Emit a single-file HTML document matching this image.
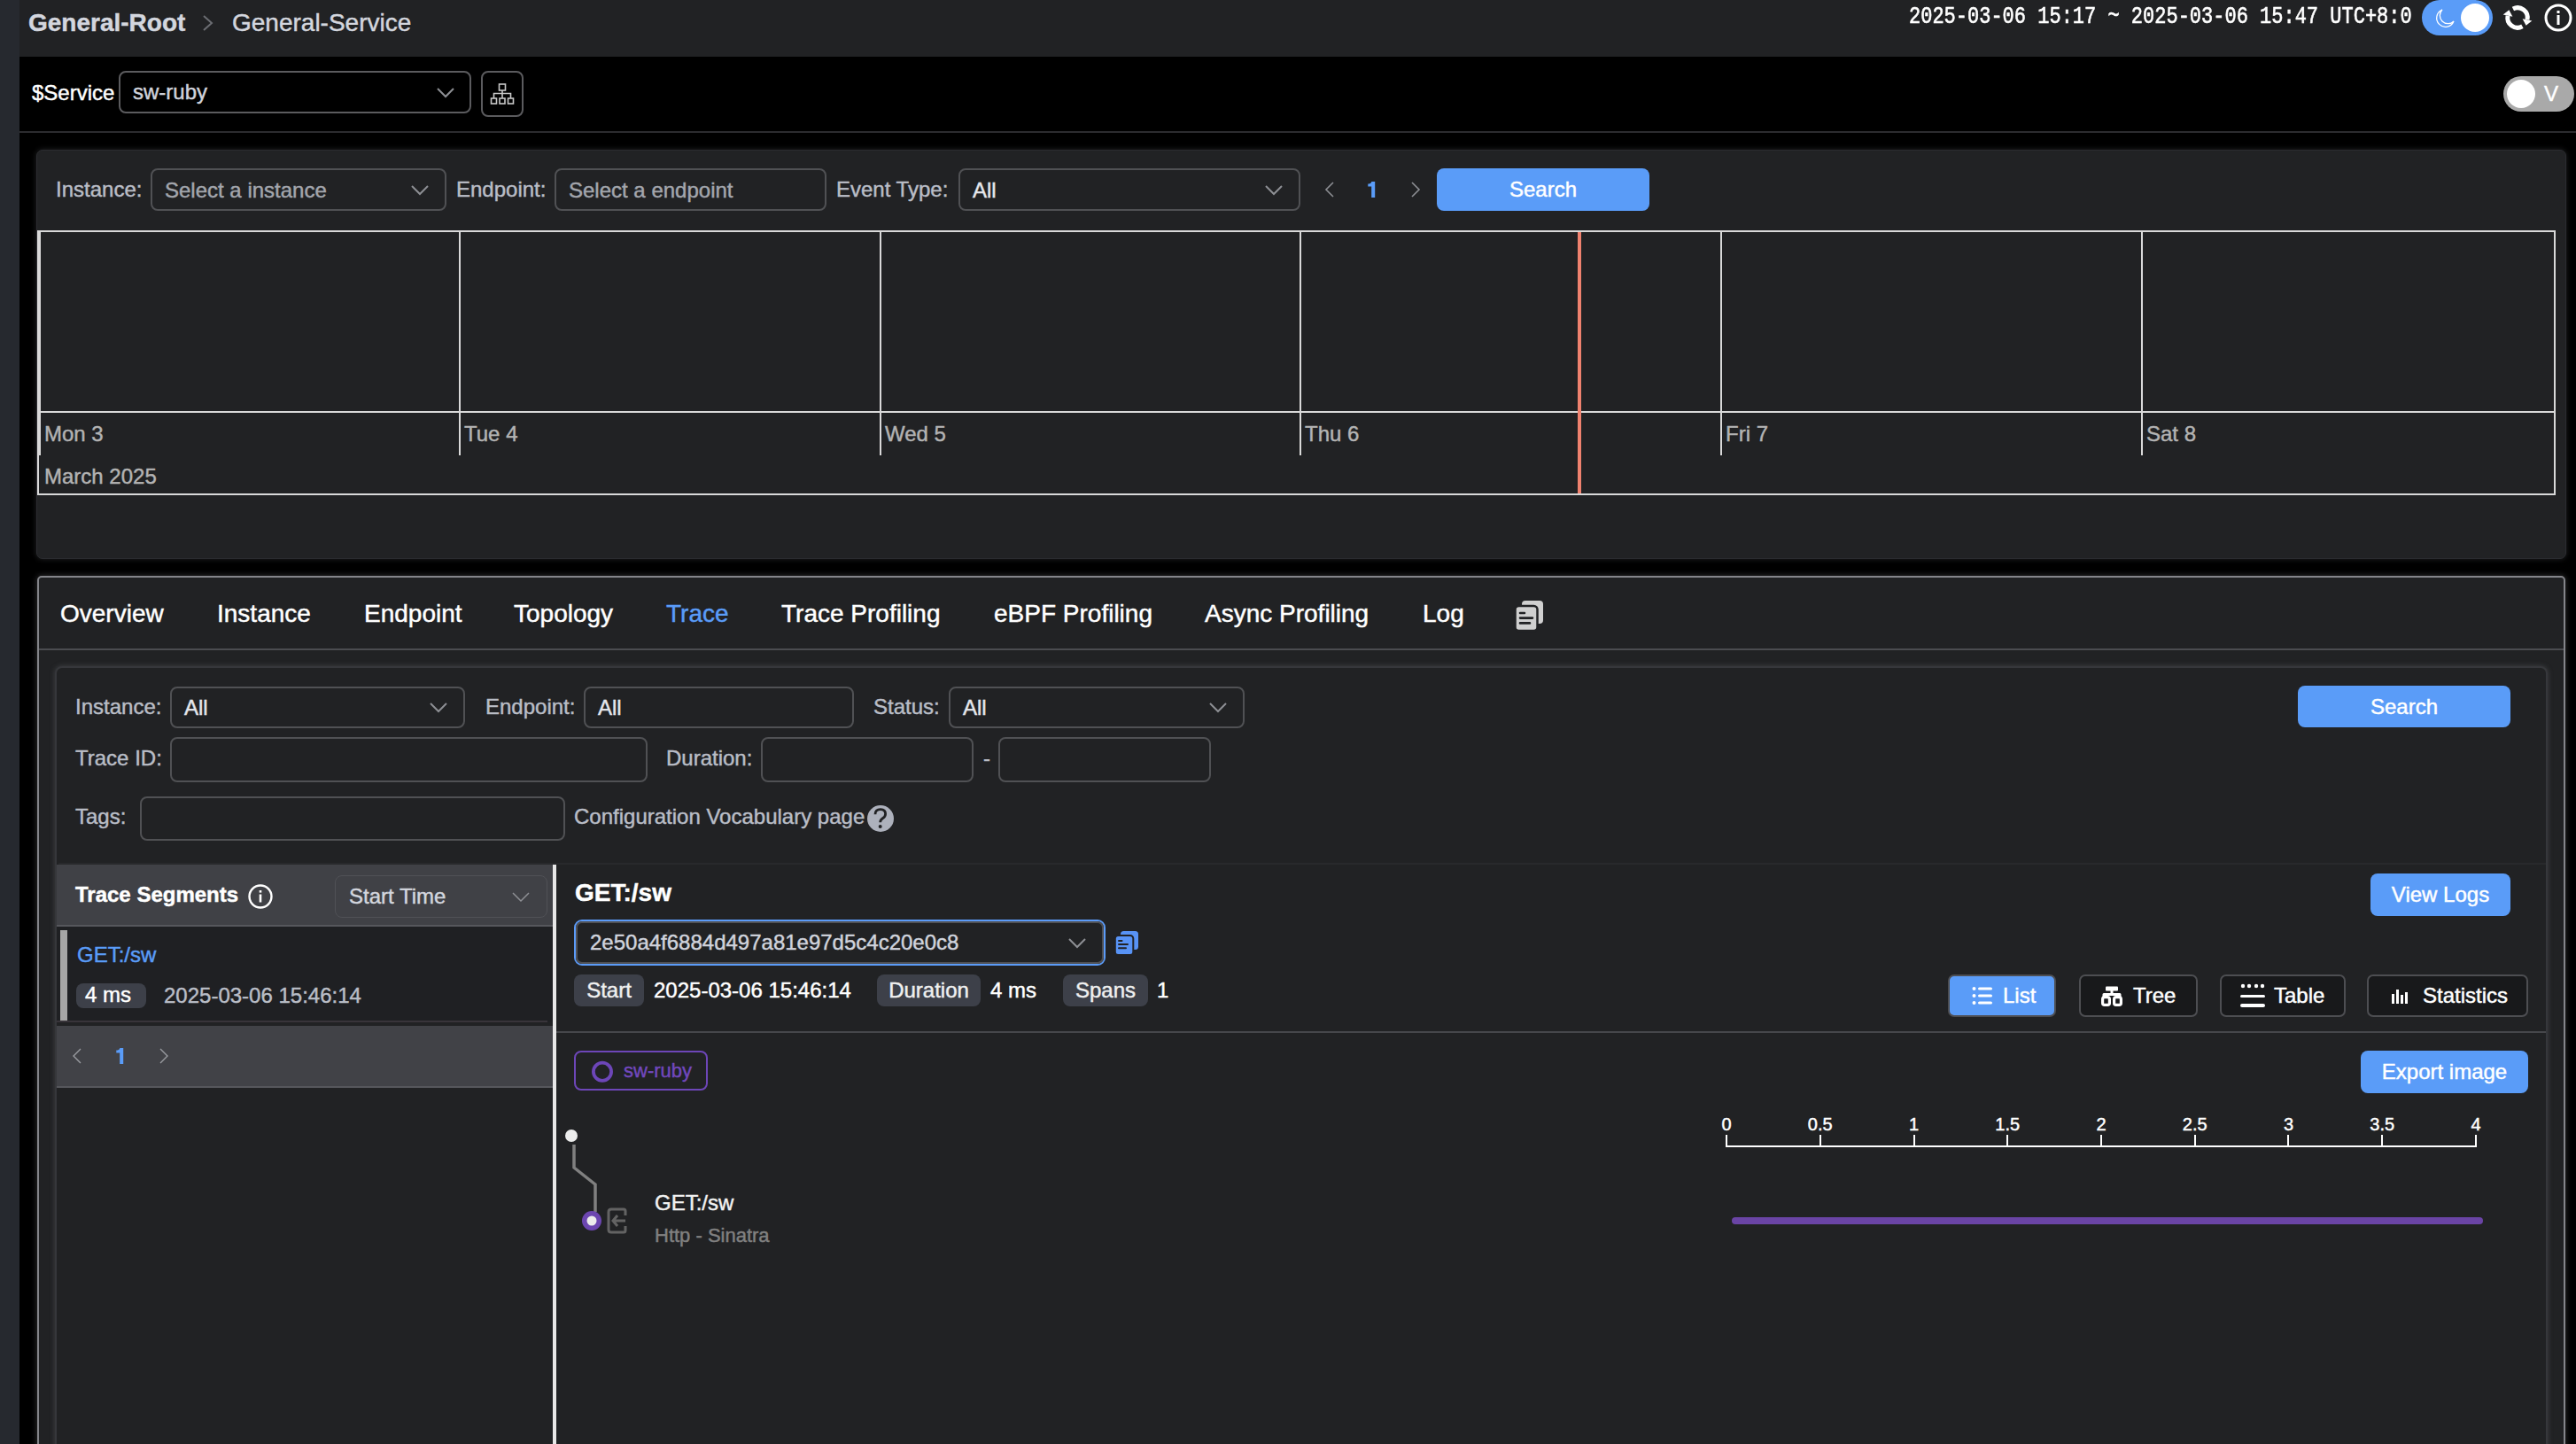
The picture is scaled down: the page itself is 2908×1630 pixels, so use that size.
<!DOCTYPE html>
<html><head><meta charset="utf-8"><style>
html,body{margin:0;padding:0;width:2908px;height:1630px;overflow:hidden;background:#000;}
body{position:relative;font-family:"Liberation Sans",sans-serif;}
.t{position:absolute;white-space:nowrap;font-family:"Liberation Sans",sans-serif;-webkit-text-stroke:0.45px currentColor;}
.r{position:absolute;}
svg.r{overflow:visible;}
</style></head><body>
<div class="r" style="left:0px;top:0px;width:22px;height:1630px;background:#26292f"></div>
<div class="r" style="left:22px;top:0px;width:2886px;height:64px;background:#212224"></div>
<div class="r" style="left:22px;top:148px;width:2886px;height:2px;background:#2c2c2f"></div>
<div class="t" style="left:32px;top:12px;font-size:28px;line-height:28px;color:#d3d6de;font-weight:700;font-family:'Liberation Sans', sans-serif;">General-Root</div>
<svg class="r" style="left:226px;top:16px" width="18" height="20" viewBox="0 0 18 20"><path d="M4 2 L13 10 L4 18" fill="none" stroke="#6b6d72" stroke-width="2"/></svg>
<div class="t" style="left:262px;top:12px;font-size:28px;line-height:28px;color:#d3d6de;font-weight:400;font-family:'Liberation Sans', sans-serif;">General-Service</div>
<div class="t" style="left:2155px;top:6px;font-size:22px;line-height:22px;color:#fff;font-family:'Liberation Mono',monospace;-webkit-text-stroke:0.5px #fff;transform:scale(1,1.26);transform-origin:0 0">2025-03-06 15:17 ~ 2025-03-06 15:47 UTC+8:0</div>
<div class="r" style="left:2734px;top:0px;width:80px;height:40px;background:#5a9cf8;border-radius:20px"></div>
<div class="r" style="left:2778px;top:4px;width:32px;height:32px;background:#fff;border-radius:50%"></div>
<svg class="r" style="left:2748px;top:8px" width="26" height="26" viewBox="0 0 26 26"><path d="M9 3 A10 10 0 1 0 22 16 A9 9 0 0 1 9 3 Z" fill="none" stroke="#fff" stroke-width="1.3"/></svg>
<svg class="r" style="left:2820px;top:0px" width="48" height="40" viewBox="0 0 48 40"><g fill="#fff"><path d="M16.9 10.0 A11.2 11.2 0 0 1 32.95 22.33" fill="none" stroke="#fff" stroke-width="5"/><path d="M27.6 21.2 L38.3 23.5 L31.6 28.8 Z"/><path d="M27.43 29.8 A11.2 11.2 0 0 1 11.05 17.67" fill="none" stroke="#fff" stroke-width="5"/><path d="M16.4 18.8 L5.7 16.5 L12.4 11.2 Z"/></g></svg>
<svg class="r" style="left:2872px;top:4px" width="32" height="32" viewBox="0 0 32 32"><circle cx="16" cy="16" r="14" fill="none" stroke="#fff" stroke-width="3"/><rect x="14.5" y="8" width="3" height="3" fill="#fff"/><rect x="14.5" y="13" width="3" height="11" fill="#fff"/></svg>
<div class="t" style="left:36px;top:93px;font-size:24px;line-height:24px;color:#fff;font-weight:400;font-family:'Liberation Sans', sans-serif;">$Service</div>
<div class="r" style="left:134px;top:80px;width:398px;height:48px;border:2px solid #5b5b5e;border-radius:8px;box-sizing:border-box;background:#000"></div>
<div class="t" style="left:150px;top:92px;font-size:24px;line-height:24px;color:#d0d3dc;font-weight:400;font-family:'Liberation Sans', sans-serif;">sw-ruby</div>
<svg class="r" style="left:493px;top:99px" width="20" height="12" viewBox="0 0 20 12"><path d="M1 1 L10.0 10 L19 1" fill="none" stroke="#8d8f94" stroke-width="2"/></svg>
<div class="r" style="left:543px;top:80px;width:48px;height:52px;border:2px solid #5b5b5e;border-radius:8px;box-sizing:border-box"></div>
<svg class="r" style="left:553px;top:92px" width="28" height="28" viewBox="0 0 28 28"><g fill="none" stroke="#c8c8c8" stroke-width="1.6"><rect x="10.5" y="3" width="7" height="7"/><rect x="1.5" y="19" width="6" height="6"/><rect x="11" y="19" width="6" height="6"/><rect x="20.5" y="19" width="6" height="6"/><path d="M14 10 V13.5 M4.5 19 V13.5 H23.5 V19 M14 13.5 V19"/></g></svg>
<div class="r" style="left:2826px;top:86px;width:80px;height:40px;background:#a9a9a9;border-radius:20px"></div>
<div class="r" style="left:2830px;top:90px;width:32px;height:32px;background:#fff;border-radius:50%"></div>
<div class="t" style="left:2872px;top:94px;font-size:24px;line-height:24px;color:#fff;font-weight:400;font-family:'Liberation Sans', sans-serif;">V</div>
<div class="r" style="left:41px;top:169px;width:2856px;height:462px;background:#212224;border:1px solid #2b2c30;box-sizing:border-box;border-radius:7px;box-shadow:0 0 6px 0 rgba(70,72,76,0.5)"></div>
<div class="t" style="left:63px;top:202px;font-size:24px;line-height:24px;color:#b9bdc6;font-weight:400;font-family:'Liberation Sans', sans-serif;">Instance:</div>
<div class="r" style="left:170px;top:190px;width:334px;height:48px;border:2px solid #505154;border-radius:8px;box-sizing:border-box;background:transparent"></div>
<div class="t" style="left:186px;top:203px;font-size:24px;line-height:24px;color:#a3a6ad;font-weight:400;font-family:'Liberation Sans', sans-serif;">Select a instance</div>
<svg class="r" style="left:464px;top:209px" width="20" height="12" viewBox="0 0 20 12"><path d="M1 1 L10.0 10 L19 1" fill="none" stroke="#8d8f94" stroke-width="2"/></svg>
<div class="t" style="left:515px;top:202px;font-size:24px;line-height:24px;color:#b9bdc6;font-weight:400;font-family:'Liberation Sans', sans-serif;">Endpoint:</div>
<div class="r" style="left:626px;top:190px;width:307px;height:48px;border:2px solid #505154;border-radius:8px;box-sizing:border-box;background:transparent"></div>
<div class="t" style="left:642px;top:203px;font-size:24px;line-height:24px;color:#a3a6ad;font-weight:400;font-family:'Liberation Sans', sans-serif;">Select a endpoint</div>
<div class="t" style="left:944px;top:202px;font-size:24px;line-height:24px;color:#b9bdc6;font-weight:400;font-family:'Liberation Sans', sans-serif;">Event Type:</div>
<div class="r" style="left:1082px;top:190px;width:386px;height:48px;border:2px solid #505154;border-radius:8px;box-sizing:border-box;background:transparent"></div>
<div class="t" style="left:1098px;top:203px;font-size:24px;line-height:24px;color:#e5e7ec;font-weight:400;font-family:'Liberation Sans', sans-serif;">All</div>
<svg class="r" style="left:1428px;top:209px" width="20" height="12" viewBox="0 0 20 12"><path d="M1 1 L10.0 10 L19 1" fill="none" stroke="#8d8f94" stroke-width="2"/></svg>
<svg class="r" style="left:1544px;top:205px" width="10" height="18" viewBox="0 0 10 18"><path d="M8.2 0 V18 H4.2 V5.6 H0.3 V2.6 Q3.6 2.6 4.4 0 Z" fill="#5a9cf8"/></svg>
<svg class="r" style="left:1496px;top:205px" width="10" height="18" viewBox="0 0 10 18"><path d="M9 1 L1 9.0 L9 17" fill="none" stroke="#8d8f94" stroke-width="1.6"/></svg>
<svg class="r" style="left:1593px;top:205px" width="10" height="18" viewBox="0 0 10 18"><path d="M1 1 L9 9.0 L1 17" fill="none" stroke="#8d8f94" stroke-width="1.6"/></svg>
<div class="r" style="left:1622px;top:190px;width:240px;height:48px;background:#5a9cf8;border-radius:8px"></div>
<div class="t" style="left:1622px;top:190px;width:240px;height:48px;line-height:48px;text-align:center;font-size:24px;color:#fff">Search</div>
<div class="r" style="left:42px;top:260px;width:2843px;height:299px;border:2px solid #d9d9d9;box-sizing:border-box"></div>
<div class="r" style="left:42px;top:464px;width:2843px;height:2px;background:#d9d9d9"></div>
<div class="r" style="left:44px;top:260px;width:2px;height:254px;background:#d9d9d9"></div>
<div class="t" style="left:50px;top:478px;font-size:24px;line-height:24px;color:#b3b3b3;font-weight:400;font-family:'Liberation Sans', sans-serif;">Mon 3</div>
<div class="r" style="left:518px;top:260px;width:2px;height:254px;background:#d9d9d9"></div>
<div class="t" style="left:524px;top:478px;font-size:24px;line-height:24px;color:#b3b3b3;font-weight:400;font-family:'Liberation Sans', sans-serif;">Tue 4</div>
<div class="r" style="left:993px;top:260px;width:2px;height:254px;background:#d9d9d9"></div>
<div class="t" style="left:999px;top:478px;font-size:24px;line-height:24px;color:#b3b3b3;font-weight:400;font-family:'Liberation Sans', sans-serif;">Wed 5</div>
<div class="r" style="left:1467px;top:260px;width:2px;height:254px;background:#d9d9d9"></div>
<div class="t" style="left:1473px;top:478px;font-size:24px;line-height:24px;color:#b3b3b3;font-weight:400;font-family:'Liberation Sans', sans-serif;">Thu 6</div>
<div class="r" style="left:1942px;top:260px;width:2px;height:254px;background:#d9d9d9"></div>
<div class="t" style="left:1948px;top:478px;font-size:24px;line-height:24px;color:#b3b3b3;font-weight:400;font-family:'Liberation Sans', sans-serif;">Fri 7</div>
<div class="r" style="left:2417px;top:260px;width:2px;height:254px;background:#d9d9d9"></div>
<div class="t" style="left:2423px;top:478px;font-size:24px;line-height:24px;color:#b3b3b3;font-weight:400;font-family:'Liberation Sans', sans-serif;">Sat 8</div>
<div class="t" style="left:50px;top:526px;font-size:24px;line-height:24px;color:#b3b3b3;font-weight:400;font-family:'Liberation Sans', sans-serif;">March 2025</div>
<div class="r" style="left:1781px;top:262px;width:4px;height:295px;background:#f0826f"></div>
<div class="r" style="left:42px;top:650px;width:2854px;height:1000px;border:2px solid #84858a;border-radius:5px;box-sizing:border-box;background:#212224;box-shadow:0 0 6px 1px rgba(90,92,96,0.45)"></div>
<div class="t" style="left:68px;top:679px;font-size:28px;line-height:28px;color:#fff;font-weight:400;font-family:'Liberation Sans', sans-serif;">Overview</div>
<div class="t" style="left:245px;top:679px;font-size:28px;line-height:28px;color:#fff;font-weight:400;font-family:'Liberation Sans', sans-serif;">Instance</div>
<div class="t" style="left:411px;top:679px;font-size:28px;line-height:28px;color:#fff;font-weight:400;font-family:'Liberation Sans', sans-serif;">Endpoint</div>
<div class="t" style="left:580px;top:679px;font-size:28px;line-height:28px;color:#fff;font-weight:400;font-family:'Liberation Sans', sans-serif;">Topology</div>
<div class="t" style="left:752px;top:679px;font-size:28px;line-height:28px;color:#5a9cf8;font-weight:400;font-family:'Liberation Sans', sans-serif;">Trace</div>
<div class="t" style="left:882px;top:679px;font-size:28px;line-height:28px;color:#fff;font-weight:400;font-family:'Liberation Sans', sans-serif;">Trace Profiling</div>
<div class="t" style="left:1122px;top:679px;font-size:28px;line-height:28px;color:#fff;font-weight:400;font-family:'Liberation Sans', sans-serif;">eBPF Profiling</div>
<div class="t" style="left:1360px;top:679px;font-size:28px;line-height:28px;color:#fff;font-weight:400;font-family:'Liberation Sans', sans-serif;">Async Profiling</div>
<div class="t" style="left:1606px;top:679px;font-size:28px;line-height:28px;color:#fff;font-weight:400;font-family:'Liberation Sans', sans-serif;">Log</div>
<svg class="r" style="left:1710px;top:677px" width="34" height="36" viewBox="0 0 34 36"><rect x="8" y="1" width="24" height="26" rx="4" fill="#d0d0d0"/><rect x="0.5" y="7" width="25" height="28" rx="4" fill="#d0d0d0" stroke="#212224" stroke-width="2.5"/><g stroke="#212224" stroke-width="2.6" stroke-linecap="round"><path d="M6 15 H11 M6 20.6 H20 M6 26.4 H17"/></g></svg>
<div class="r" style="left:44px;top:732px;width:2850px;height:2px;background:#4b4c50"></div>
<div class="r" style="left:62px;top:752px;width:2814px;height:900px;border:2px solid #36373b;border-radius:8px;box-sizing:border-box;background:#212224;box-shadow:0 0 5px 1px rgba(80,82,86,0.5)"></div>
<div class="t" style="left:85px;top:786px;font-size:24px;line-height:24px;color:#b9bdc6;font-weight:400;font-family:'Liberation Sans', sans-serif;">Instance:</div>
<div class="r" style="left:192px;top:775px;width:333px;height:47px;border:2px solid #505154;border-radius:8px;box-sizing:border-box;background:transparent"></div>
<div class="t" style="left:208px;top:787px;font-size:24px;line-height:24px;color:#e5e7ec;font-weight:400;font-family:'Liberation Sans', sans-serif;">All</div>
<svg class="r" style="left:485px;top:793px" width="20" height="12" viewBox="0 0 20 12"><path d="M1 1 L10.0 10 L19 1" fill="none" stroke="#8d8f94" stroke-width="2"/></svg>
<div class="t" style="left:548px;top:786px;font-size:24px;line-height:24px;color:#b9bdc6;font-weight:400;font-family:'Liberation Sans', sans-serif;">Endpoint:</div>
<div class="r" style="left:659px;top:775px;width:305px;height:47px;border:2px solid #505154;border-radius:8px;box-sizing:border-box;background:transparent"></div>
<div class="t" style="left:675px;top:787px;font-size:24px;line-height:24px;color:#e5e7ec;font-weight:400;font-family:'Liberation Sans', sans-serif;">All</div>
<div class="t" style="left:986px;top:786px;font-size:24px;line-height:24px;color:#b9bdc6;font-weight:400;font-family:'Liberation Sans', sans-serif;">Status:</div>
<div class="r" style="left:1071px;top:775px;width:334px;height:47px;border:2px solid #505154;border-radius:8px;box-sizing:border-box;background:transparent"></div>
<div class="t" style="left:1087px;top:787px;font-size:24px;line-height:24px;color:#e5e7ec;font-weight:400;font-family:'Liberation Sans', sans-serif;">All</div>
<svg class="r" style="left:1365px;top:793px" width="20" height="12" viewBox="0 0 20 12"><path d="M1 1 L10.0 10 L19 1" fill="none" stroke="#8d8f94" stroke-width="2"/></svg>
<div class="r" style="left:2594px;top:774px;width:240px;height:47px;background:#5a9cf8;border-radius:8px"></div>
<div class="t" style="left:2594px;top:774px;width:240px;height:47px;line-height:47px;text-align:center;font-size:24px;color:#fff">Search</div>
<div class="t" style="left:85px;top:844px;font-size:24px;line-height:24px;color:#b9bdc6;font-weight:400;font-family:'Liberation Sans', sans-serif;">Trace ID:</div>
<div class="r" style="left:192px;top:832px;width:539px;height:51px;border:2px solid #505154;border-radius:8px;box-sizing:border-box;background:transparent"></div>
<div class="t" style="left:752px;top:844px;font-size:24px;line-height:24px;color:#b9bdc6;font-weight:400;font-family:'Liberation Sans', sans-serif;">Duration:</div>
<div class="r" style="left:859px;top:832px;width:240px;height:51px;border:2px solid #505154;border-radius:8px;box-sizing:border-box;background:transparent"></div>
<div class="t" style="left:1110px;top:844px;font-size:24px;line-height:24px;color:#b9bdc6;font-weight:400;font-family:'Liberation Sans', sans-serif;">-</div>
<div class="r" style="left:1127px;top:832px;width:240px;height:51px;border:2px solid #505154;border-radius:8px;box-sizing:border-box;background:transparent"></div>
<div class="t" style="left:85px;top:910px;font-size:24px;line-height:24px;color:#b9bdc6;font-weight:400;font-family:'Liberation Sans', sans-serif;">Tags:</div>
<div class="r" style="left:158px;top:899px;width:480px;height:50px;border:2px solid #505154;border-radius:8px;box-sizing:border-box;background:transparent"></div>
<div class="t" style="left:648px;top:910px;font-size:24px;line-height:24px;color:#b9bdc6;font-weight:400;font-family:'Liberation Sans', sans-serif;">Configuration Vocabulary page</div>
<svg class="r" style="left:977px;top:908px" width="32" height="32" viewBox="0 0 32 32"><circle cx="17" cy="16" r="15" fill="#adb1bc"/><path d="M11 11.2 Q11 5.6 17 5.6 Q22.6 5.6 22.6 10.8 Q22.6 13.8 19.4 15.8 Q16.7 17.5 16.7 20.2" fill="none" stroke="#212224" stroke-width="2.8"/><circle cx="16.7" cy="25" r="2" fill="#212224"/></svg>
<div class="r" style="left:66px;top:974px;width:2808px;height:2px;background:#28292c"></div>
<div class="r" style="left:64px;top:976px;width:560px;height:70px;background:#404146"></div>
<div class="r" style="left:64px;top:1044px;width:560px;height:2px;background:#56575c"></div>
<div class="t" style="left:85px;top:998px;font-size:24px;line-height:24px;color:#fff;font-weight:700;font-family:'Liberation Sans', sans-serif;">Trace Segments</div>
<svg class="r" style="left:279px;top:997px" width="30" height="30" viewBox="0 0 30 30"><circle cx="15" cy="15" r="12.5" fill="none" stroke="#fff" stroke-width="2.4"/><rect x="13.7" y="8" width="2.6" height="2.6" fill="#fff"/><rect x="13.7" y="12.5" width="2.6" height="9" fill="#fff"/></svg>
<div class="r" style="left:378px;top:988px;width:240px;height:48px;border:1.5px solid #505156;border-radius:8px;box-sizing:border-box"></div>
<div class="t" style="left:394px;top:1000px;font-size:24px;line-height:24px;color:#d3d6de;font-weight:400;font-family:'Liberation Sans', sans-serif;">Start Time</div>
<svg class="r" style="left:578px;top:1007px" width="20" height="12" viewBox="0 0 20 12"><path d="M1 1 L10.0 10 L19 1" fill="none" stroke="#8d8f94" stroke-width="1.5"/></svg>
<div class="r" style="left:64px;top:1046px;width:560px;height:107px;background:#1f2023"></div>
<div class="r" style="left:68px;top:1050px;width:8px;height:102px;background:#a6a6a6"></div>
<div class="t" style="left:87px;top:1066px;font-size:24px;line-height:24px;color:#5a9cf8;font-weight:400;font-family:'Liberation Sans', sans-serif;">GET:/sw</div>
<div class="r" style="left:86px;top:1110px;width:79px;height:28px;background:#3d4049;border-radius:8px"></div>
<div class="t" style="left:96px;top:1111px;font-size:24px;line-height:24px;color:#fff;font-weight:400;font-family:'Liberation Sans', sans-serif;">4 ms</div>
<div class="t" style="left:185px;top:1112px;font-size:24px;line-height:24px;color:#b9bdc6;font-weight:400;font-family:'Liberation Sans', sans-serif;">2025-03-06 15:46:14</div>
<div class="r" style="left:64px;top:1152px;width:554px;height:2px;background:#38343a"></div>
<div class="r" style="left:64px;top:1158px;width:560px;height:68px;background:#414247"></div>
<div class="r" style="left:64px;top:1226px;width:560px;height:2px;background:#56575c"></div>
<svg class="r" style="left:82px;top:1183px" width="10" height="18" viewBox="0 0 10 18"><path d="M9 1 L1 9.0 L9 17" fill="none" stroke="#9a9ca1" stroke-width="1.4"/></svg>
<svg class="r" style="left:130.5px;top:1182.5px" width="10" height="18" viewBox="0 0 10 18"><path d="M8.2 0 V18 H4.2 V5.6 H0.3 V2.6 Q3.6 2.6 4.4 0 Z" fill="#5a9cf8"/></svg>
<svg class="r" style="left:180px;top:1183px" width="10" height="18" viewBox="0 0 10 18"><path d="M1 1 L9 9.0 L1 17" fill="none" stroke="#9a9ca1" stroke-width="1.4"/></svg>
<div class="r" style="left:64px;top:1228px;width:560px;height:420px;background:#212224"></div>
<div class="r" style="left:624px;top:976px;width:4px;height:700px;background:#e8e8e8"></div>
<div class="t" style="left:649px;top:994px;font-size:28px;line-height:28px;color:#fff;font-weight:700;font-family:'Liberation Sans', sans-serif;">GET:/sw</div>
<div class="r" style="left:648px;top:1038px;width:600px;height:52px;border:2px solid #5b9bf8;border-radius:9px;box-sizing:border-box"></div>
<div class="r" style="left:650px;top:1040px;width:596px;height:48px;border:2px solid #505155;border-radius:7px;box-sizing:border-box"></div>
<div class="t" style="left:666px;top:1052px;font-size:24px;line-height:24px;color:#d0d3dc;font-weight:400;font-family:'Liberation Sans', sans-serif;">2e50a4f6884d497a81e97d5c4c20e0c8</div>
<svg class="r" style="left:1206px;top:1059px" width="20" height="12" viewBox="0 0 20 12"><path d="M1 1 L10.0 10 L19 1" fill="none" stroke="#8d8f94" stroke-width="2"/></svg>
<svg class="r" style="left:1258px;top:1050px" width="28" height="29" viewBox="0 0 28 29"><rect x="7" y="1" width="20" height="21" rx="3.5" fill="#5893f5"/><rect x="0.8" y="6" width="20.5" height="22" rx="3.5" fill="#5893f5" stroke="#212224" stroke-width="2"/><g stroke="#212224" stroke-width="2" stroke-linecap="round"><path d="M5 12 H8.5 M5 16 H15 M5 20.3 H13"/></g></svg>
<div class="r" style="left:648px;top:1100px;width:79px;height:36px;background:#3d4049;border-radius:8px"></div>
<div class="t" style="left:648px;top:1100px;width:79px;height:36px;line-height:36px;text-align:center;font-size:24px;color:#f0f0f0">Start</div>
<div class="t" style="left:738px;top:1106px;font-size:24px;line-height:24px;color:#fff;font-weight:400;font-family:'Liberation Sans', sans-serif;">2025-03-06 15:46:14</div>
<div class="r" style="left:990px;top:1100px;width:117px;height:36px;background:#3d4049;border-radius:8px"></div>
<div class="t" style="left:990px;top:1100px;width:117px;height:36px;line-height:36px;text-align:center;font-size:24px;color:#f0f0f0">Duration</div>
<div class="t" style="left:1118px;top:1106px;font-size:24px;line-height:24px;color:#fff;font-weight:400;font-family:'Liberation Sans', sans-serif;">4 ms</div>
<div class="r" style="left:1200px;top:1100px;width:96px;height:36px;background:#3d4049;border-radius:8px"></div>
<div class="t" style="left:1200px;top:1100px;width:96px;height:36px;line-height:36px;text-align:center;font-size:24px;color:#f0f0f0">Spans</div>
<div class="t" style="left:1306px;top:1106px;font-size:24px;line-height:24px;color:#fff;font-weight:400;font-family:'Liberation Sans', sans-serif;">1</div>
<div class="r" style="left:2676px;top:986px;width:158px;height:48px;background:#5a9cf8;border-radius:8px"></div>
<div class="t" style="left:2676px;top:986px;width:158px;height:48px;line-height:48px;text-align:center;font-size:24px;color:#fff">View Logs</div>
<div class="r" style="left:2199px;top:1100px;width:122px;height:48px;background:#5a9cf8;border:2px solid #4d4e52;border-radius:7px;box-sizing:border-box"></div>
<svg class="r" style="left:2226px;top:1113px" width="24" height="22" viewBox="0 0 24 22"><g fill="#fff"><circle cx="2.5" cy="3" r="2"/><circle cx="2.5" cy="11" r="2"/><circle cx="2.5" cy="19" r="2"/><rect x="7" y="1.5" width="16" height="3" rx="1.5"/><rect x="7" y="9.5" width="16" height="3" rx="1.5"/><rect x="7" y="17.5" width="16" height="3" rx="1.5"/></g></svg>
<div class="t" style="left:2261px;top:1112px;font-size:24px;line-height:24px;color:#fff;font-weight:400;font-family:'Liberation Sans', sans-serif;">List</div>
<div class="r" style="left:2347px;top:1100px;width:134px;height:48px;background:#18191b;border:2px solid #4d4e52;border-radius:7px;box-sizing:border-box"></div>
<svg class="r" style="left:2372px;top:1113px" width="26" height="24" viewBox="0 0 26 24"><g fill="#fff"><rect x="5" y="0.5" width="14" height="5" rx="1"/><rect x="10.5" y="5" width="3" height="3"/><path d="M1.5 13 V9.5 Q1.5 8 3 8 H21 Q22.5 8 22.5 9.5 V13 H19.5 V11 H4.5 V13 Z"/></g><g fill="none" stroke="#fff" stroke-width="3.2"><rect x="1.6" y="12.6" width="7.8" height="8.8" rx="2.2"/><rect x="14.6" y="12.6" width="7.8" height="8.8" rx="2.2"/></g></svg>
<div class="t" style="left:2408px;top:1112px;font-size:24px;line-height:24px;color:#fff;font-weight:400;font-family:'Liberation Sans', sans-serif;">Tree</div>
<div class="r" style="left:2506px;top:1100px;width:142px;height:48px;background:#18191b;border:2px solid #4d4e52;border-radius:7px;box-sizing:border-box"></div>
<svg class="r" style="left:2529px;top:1110px" width="28" height="28" viewBox="0 0 28 28"><g fill="#fff"><circle cx="3" cy="3" r="2.2"/><circle cx="10" cy="3" r="2.2"/><circle cx="18" cy="3" r="2.2"/><circle cx="25" cy="3" r="2.2"/><rect x="0" y="13" width="28" height="3" rx="1.5"/><rect x="0" y="23" width="28" height="4" rx="2"/></g></svg>
<div class="t" style="left:2567px;top:1112px;font-size:24px;line-height:24px;color:#fff;font-weight:400;font-family:'Liberation Sans', sans-serif;">Table</div>
<div class="r" style="left:2672px;top:1100px;width:182px;height:48px;background:#18191b;border:2px solid #4d4e52;border-radius:7px;box-sizing:border-box"></div>
<svg class="r" style="left:2700px;top:1117px" width="20" height="16" viewBox="0 0 20 16"><g fill="#fff"><rect x="0" y="5" width="3" height="11"/><rect x="5" y="0" width="3" height="16"/><rect x="10" y="6" width="3" height="10"/><rect x="15" y="3" width="3" height="13"/></g></svg>
<div class="t" style="left:2735px;top:1112px;font-size:24px;line-height:24px;color:#fff;font-weight:400;font-family:'Liberation Sans', sans-serif;">Statistics</div>
<div class="r" style="left:628px;top:1164px;width:2246px;height:2px;background:#46474b"></div>
<div class="r" style="left:648px;top:1186px;width:151px;height:45px;border:2px solid #6d46b8;border-radius:8px;box-sizing:border-box"></div>
<svg class="r" style="left:667px;top:1197px" width="26" height="26" viewBox="0 0 26 26"><circle cx="13" cy="12.7" r="10.1" fill="none" stroke="#6d46b8" stroke-width="3.8"/></svg>
<div class="t" style="left:704px;top:1198px;font-size:22px;line-height:22px;color:#7148bd;font-weight:400;font-family:'Liberation Sans', sans-serif;">sw-ruby</div>
<div class="r" style="left:2665px;top:1186px;width:189px;height:48px;background:#5a9cf8;border-radius:8px"></div>
<div class="t" style="left:2665px;top:1186px;width:189px;height:48px;line-height:48px;text-align:center;font-size:24px;color:#fff">Export image</div>
<svg class="r" style="left:1947px;top:1280px" width="850" height="16" viewBox="0 0 850 16"><path d="M2 1 V14 H848 V1" fill="none" stroke="#fff" stroke-width="2"/><path d="M108 1 V14" stroke="#fff" stroke-width="2"/><path d="M214 1 V14" stroke="#fff" stroke-width="2"/><path d="M319 1 V14" stroke="#fff" stroke-width="2"/><path d="M425 1 V14" stroke="#fff" stroke-width="2"/><path d="M531 1 V14" stroke="#fff" stroke-width="2"/><path d="M636 1 V14" stroke="#fff" stroke-width="2"/><path d="M742 1 V14" stroke="#fff" stroke-width="2"/></svg>
<div class="t" style="left:1909.0px;top:1259px;width:80px;text-align:center;font-size:20px;line-height:20px;color:#fff">0</div>
<div class="t" style="left:2014.75px;top:1259px;width:80px;text-align:center;font-size:20px;line-height:20px;color:#fff">0.5</div>
<div class="t" style="left:2120.5px;top:1259px;width:80px;text-align:center;font-size:20px;line-height:20px;color:#fff">1</div>
<div class="t" style="left:2226.25px;top:1259px;width:80px;text-align:center;font-size:20px;line-height:20px;color:#fff">1.5</div>
<div class="t" style="left:2332.0px;top:1259px;width:80px;text-align:center;font-size:20px;line-height:20px;color:#fff">2</div>
<div class="t" style="left:2437.75px;top:1259px;width:80px;text-align:center;font-size:20px;line-height:20px;color:#fff">2.5</div>
<div class="t" style="left:2543.5px;top:1259px;width:80px;text-align:center;font-size:20px;line-height:20px;color:#fff">3</div>
<div class="t" style="left:2649.25px;top:1259px;width:80px;text-align:center;font-size:20px;line-height:20px;color:#fff">3.5</div>
<div class="t" style="left:2755.0px;top:1259px;width:80px;text-align:center;font-size:20px;line-height:20px;color:#fff">4</div>
<div class="r" style="left:1955px;top:1374px;width:848px;height:8px;background:#6a44a5;border-radius:4px"></div>
<svg class="r" style="left:628px;top:1260px" width="120" height="140" viewBox="0 0 120 140"><path d="M20 32 V58 L44 77 V108" fill="none" stroke="#808080" stroke-width="3.5"/><circle cx="17" cy="22" r="7" fill="#ececec"/><circle cx="40" cy="118" r="11" fill="#6c46b0"/><circle cx="40" cy="118" r="5.5" fill="#ececec"/><g fill="none" stroke="#636363" stroke-width="3" filter="url(#bl)"><path d="M76 105 H62 Q59 105 59 108 V128 Q59 131 62 131 H76 Q78 131 78 129 V124 M78 112 V107 Q78 105 76 105"/><path d="M69 112 L64 118 L69 124 M64 118 H78"/></g><defs><filter id="bl"><feGaussianBlur stdDeviation="0.6"/></filter></defs></svg>
<div class="t" style="left:739px;top:1346px;font-size:24px;line-height:24px;color:#f2f2f2;font-weight:400;font-family:'Liberation Sans', sans-serif;">GET:/sw</div>
<div class="t" style="left:739px;top:1384px;font-size:22px;line-height:22px;color:#808080;font-weight:400;font-family:'Liberation Sans', sans-serif;">Http - Sinatra</div>
</body></html>
